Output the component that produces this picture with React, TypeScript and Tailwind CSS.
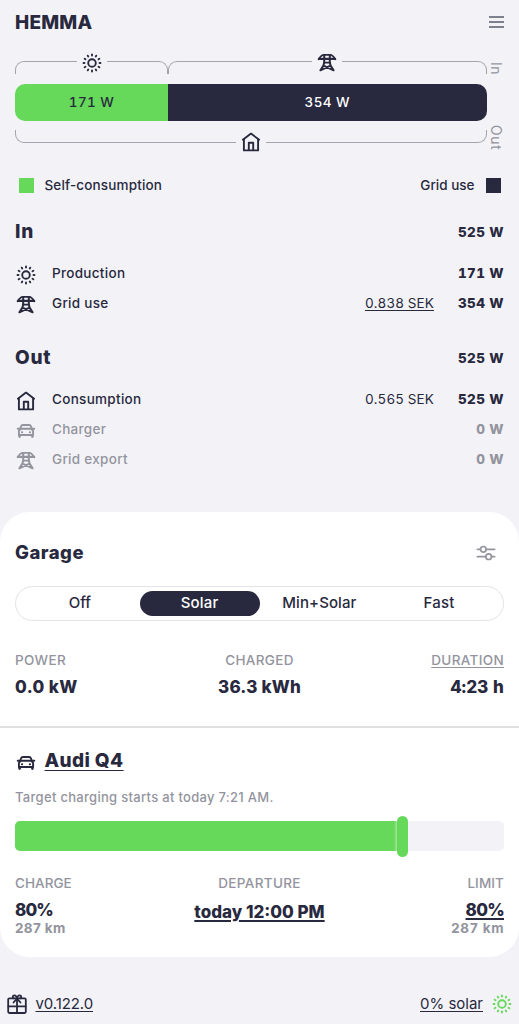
import type { ReactNode } from "react";

type IconProps = { className?: string };

function SunIcon({ className = "" }: IconProps) {
  return (
    <svg viewBox="0 0 20 20" className={`h-5 w-5 shrink-0 ${className}`} fill="none" stroke="currentColor" strokeWidth="1.9" strokeLinecap="round">
      <circle cx="10" cy="10" r="3.8" />
      {[0, 30, 60, 90, 120, 150, 180, 210, 240, 270, 300, 330].map((a) => (
        <path key={a} d="M10 1.5V2.5" transform={`rotate(${a} 10 10)`} />
      ))}
    </svg>
  );
}

function PylonIcon({ className = "" }: IconProps) {
  return (
    <svg viewBox="0 0 20 20" className={`h-5 w-5 shrink-0 ${className}`} fill="none" stroke="currentColor" strokeWidth="1.8" strokeLinecap="round" strokeLinejoin="round">
      <path d="M1.6 6.2C3 4 4.8 1.9 6.8 1.9H13.2C15.2 1.9 17 4 18.4 6.2" />
      <path d="M2 5.8H18" strokeWidth="2.2" />
      <path d="M7.2 1.9V9.4L6.4 12.6L3.4 17.3L13.4 12.6M12.8 1.9V9.4L13.6 12.6L16.6 17.3L6.6 12.6" strokeWidth="2" />
      <path d="M7.2 9.6H12.8" />
    </svg>
  );
}

function HomeIcon({ className = "" }: IconProps) {
  return (
    <svg viewBox="0 0 20 20" className={`h-5 w-5 shrink-0 ${className}`} fill="none" stroke="currentColor" strokeWidth="1.9" strokeLinecap="round" strokeLinejoin="round">
      <path d="M1.9 7.7L10 1.6L18.1 7.7" />
      <path d="M2.9 7.4V18.4H17.1V7.4" />
      <path d="M7.8 18.1V10.8H12.2V18.1" />
    </svg>
  );
}

function CarIcon({ className = "" }: IconProps) {
  return (
    <svg viewBox="0 0 20 20" className={`h-5 w-5 shrink-0 ${className}`} fill="none" stroke="currentColor" strokeWidth="1.9" strokeLinecap="round" strokeLinejoin="round">
      <path d="M4.1 8L5.1 5.2Q5.5 4 6.9 4H13.1Q14.5 4 14.9 5.2L15.9 8" />
      <path d="M1.7 7.7H18.3" />
      <path d="M4.3 8.1L2.9 9.8V14H17.1V9.8L15.7 8.1" />
      <path d="M3.6 14.5V15.6M16.4 14.5V15.6" strokeWidth="2.6" />
      <path d="M5.9 11.2H6.2M13.8 11.2H14.1" />
    </svg>
  );
}

function GiftIcon({ className = "" }: IconProps) {
  return (
    <svg viewBox="0 0 20 20" className={`h-5 w-5 shrink-0 ${className}`} fill="none" stroke="currentColor" strokeWidth="1.8" strokeLinecap="round" strokeLinejoin="round">
      <rect x="1.2" y="4.4" width="17.6" height="14.6" rx="1.2" />
      <path d="M1.4 12.4H18.6M10 4.2V18.8" />
      <path d="M10 4.4C9.6 2.4 8.8 1.3 7.4 1.3C5.4 1.3 5.2 3.8 6.8 4.4M10 4.4C10.4 2.4 11.2 1.3 12.6 1.3C14.6 1.3 14.8 3.8 13.2 4.4" />
      <path d="M10 4.6L6.5 8.5M10 4.6L13.5 8.5" />
    </svg>
  );
}

function SlidersIcon({ className = "" }: IconProps) {
  return (
    <svg viewBox="0 0 20 20" className={`h-5 w-5 shrink-0 ${className}`} fill="none" stroke="currentColor" strokeWidth="1.7" strokeLinecap="round">
      <path d="M1.4 6.3H4.3M10.3 6.3H18.6M1.4 13.7H9.7M15.7 13.7H18.6" />
      <circle cx="7.3" cy="6.3" r="2.8" />
      <circle cx="12.7" cy="13.7" r="2.8" />
    </svg>
  );
}

function TopBracket({ className, children }: { className: string; children: ReactNode }) {
  return (
    <div className={`flex h-[22px] items-end ${className}`}>
      <div className="h-[13px] flex-1 rounded-tl-[9px] border-t border-l border-[#a3a4ad]" />
      <div className="flex h-[22px] w-[30px] justify-center">{children}</div>
      <div className="h-[13px] flex-1 rounded-tr-[9px] border-t border-r border-[#a3a4ad]" />
    </div>
  );
}

type RowProps = { icon: ReactNode; label: string; value: string; cost?: string; underline?: boolean; muted?: boolean };

function Row({ icon, label, value, cost, underline = false, muted = false }: RowProps) {
  return (
    <div className={`flex h-[30px] items-center text-[13.5px] ${muted ? "text-[#93949e]" : ""}`}>
      <div className="w-[37px] pt-[3px] pl-[1px]">{icon}</div>
      <div className="flex-1 font-medium tracking-[0.3px]">{label}</div>
      {cost && <div className={`tracking-[0.1px] tabular-nums ${underline ? "underline underline-offset-2" : ""}`}>{cost}</div>}
      <div className="w-[70px] text-right font-extrabold tracking-[0.4px] tabular-nums">{value}</div>
    </div>
  );
}

function Heading({ title }: { title: string }) {
  return (
    <div className="flex h-[30px] items-center justify-between">
      <h2 className="pt-[2px] text-[19px] font-extrabold tracking-[0.8px]">{title}</h2>
      <div className="pt-[2px] text-[13.5px] font-extrabold tracking-[0.4px] tabular-nums">525 W</div>
    </div>
  );
}

export default function App() {
  return (
    <div className="h-[1024px] w-[519px] overflow-hidden bg-[#f3f3f7] font-['Inter',sans-serif] text-[#28293e]">
      <div className="px-[15px]">
        <header className="flex h-11 items-center justify-between">
          <h1 className="pt-[2px] text-[19px] font-extrabold tracking-[0.2px]">HEMMA</h1>
          <div className="flex w-[15px] flex-col gap-[3px] text-[#7d818c]">
            <div className="h-[2px] bg-current" />
            <div className="h-[2px] bg-current" />
            <div className="h-[2px] bg-current" />
          </div>
        </header>

        <div className="mt-2 flex h-[100px]">
          <div className="w-[471.5px]">
            <div className="flex">
              <TopBracket className="w-[153px]"><SunIcon className="mt-[0.5px]" /></TopBracket>
              <TopBracket className="flex-1"><PylonIcon className="mt-[0.5px]" /></TopBracket>
            </div>
            <div className="mt-[9.5px] flex h-[37px] overflow-hidden rounded-[10px] text-[13.5px] font-medium tabular-nums">
              <div className="flex w-[153px] items-center justify-center bg-[#66d85a] tracking-[0.4px]">171 W</div>
              <div className="flex flex-1 items-center justify-center bg-[#28293e] tracking-[0.4px] text-white">354 W</div>
            </div>
            <div className="mt-[9.5px] flex h-[22px]">
              <div className="h-[13px] flex-1 rounded-bl-[9px] border-b border-l border-[#a3a4ad]" />
              <div className="flex w-[30px] justify-center pt-[1.5px]"><HomeIcon /></div>
              <div className="h-[13px] flex-1 rounded-br-[9px] border-r border-b border-[#a3a4ad]" />
            </div>
          </div>
          <div className="flex w-[17.5px] flex-col items-end justify-between pt-[10px] pr-px pb-[2px] text-[14px] leading-[14px] tracking-[0.6px] text-[#93949e]">
            <span className="[writing-mode:vertical-rl]">In</span>
            <span className="[writing-mode:vertical-rl]">Out</span>
          </div>
        </div>

        <div className="mt-[23.5px] mb-[20.5px] flex h-5 items-center justify-between px-[3.5px] text-[13.5px] font-medium">
          <div className="flex items-center gap-[11px]">
            <div className="h-[15px] w-[15px] bg-[#66d85a]" />
            <span className="tracking-[0.15px]">Self-consumption</span>
          </div>
          <div className="flex items-center gap-[11px]">
            <span>Grid use</span>
            <div className="h-[15px] w-[15px] bg-[#28293e]" />
          </div>
        </div>

        <section>
          <Heading title="In" />
          <div className="mt-3">
            <Row icon={<SunIcon />} label="Production" value="171 W" />
            <Row icon={<PylonIcon />} label="Grid use" value="354 W" cost="0.838 SEK" underline />
          </div>
        </section>
        <section className="mt-6">
          <Heading title="Out" />
          <div className="mt-3">
            <Row icon={<HomeIcon />} label="Consumption" value="525 W" cost="0.565 SEK" />
            <Row icon={<CarIcon />} label="Charger" value="0 W" muted />
            <Row icon={<PylonIcon />} label="Grid export" value="0 W" muted />
          </div>
        </section>
      </div>

      <main className="mt-[38px] h-[445px] rounded-[30px] bg-white pt-[26px]">
        <div className="px-[15px]">
          <div className="flex h-[30px] items-center justify-between pr-[8.5px]">
            <h2 className="text-[18.5px] font-extrabold tracking-[0.5px]">Garage</h2>
            <SlidersIcon className="text-[#93949e]" />
          </div>
          <div className="mt-[18px] grid h-[35px] grid-cols-4 rounded-full border border-[#e3e3e8] px-1 py-1 text-[15px] font-medium">
            <div className="flex items-center justify-center">Off</div>
            <div className="flex items-center justify-center rounded-full bg-[#28293e] tracking-[0.2px] text-white">Solar</div>
            <div className="flex items-center justify-center tracking-[0.1px]">Min+Solar</div>
            <div className="flex items-center justify-center tracking-[0.2px]">Fast</div>
          </div>
          <div className="mt-[29px] grid h-5 grid-cols-3 items-center text-[13.5px] font-medium tracking-[0.35px] text-[#93949e]">
            <div>POWER</div>
            <div className="text-center">CHARGED</div>
            <div className="text-right underline underline-offset-2">DURATION</div>
          </div>
          <div className="mt-1 grid h-[26px] grid-cols-3 items-center pt-px text-[17px] font-extrabold">
            <div className="tracking-[0.4px]">0.0 kW</div>
            <div className="text-center tracking-[0.2px]">36.3 kWh</div>
            <div className="text-right tracking-[0.1px] tabular-nums">4:23 h</div>
          </div>
        </div>
        <div className="mt-[26px] h-[2px] bg-[#e0e0e3]" />
        <div className="px-[15px]">
          <div className="mt-[18px] flex h-[30px] items-center gap-[8.5px] pl-[1px]">
            <CarIcon className="mt-[3px]" />
            <h3 className="pt-[1px] text-[19px] font-extrabold tracking-[0.4px] underline decoration-1 underline-offset-[3px]">Audi Q4</h3>
          </div>
          <div className="mt-[11px] h-5 text-[13px] leading-5 font-medium tracking-[0.3px] text-[#93949e]">Target charging starts at today 7:21 AM.</div>
          <div className="mt-[14px] flex h-[30px] items-center rounded-[5px] bg-[#f3f3f7]">
            <div className="h-full w-[379px] rounded-l-[5px] bg-[#66d85a]" />
            <div className="h-full w-[3px] bg-gradient-to-r from-[#66d85a] to-[#a4e69c]" />
            <div className="h-[41px] w-[11px] shrink-0 rounded-full bg-[#66d85a]" />
          </div>
          <div className="mt-[22px] grid h-5 grid-cols-3 items-center text-[13.5px] font-medium tracking-[0.35px] text-[#93949e]">
            <div className="tracking-[0.05px]">CHARGE</div>
            <div className="text-center">DEPARTURE</div>
            <div className="text-right tracking-[0.1px]">LIMIT</div>
          </div>
          <div className="mt-[7px] grid grid-cols-[1fr_auto_1fr] text-[17px] font-extrabold">
            <div>
              <div className="leading-5 tracking-[-0.9px]">80%</div>
              <div className="text-[13.5px] leading-4 font-bold tracking-[0.35px] text-[#93949e]">287 km</div>
            </div>
            <div className="pt-[2px] leading-5 tracking-[0px] underline decoration-[1.5px] underline-offset-2">today 12:00 PM</div>
            <div className="text-right">
              <div className="leading-5 tracking-[-0.7px] underline decoration-[1.5px] underline-offset-2">80%</div>
              <div className="text-[13.5px] leading-4 font-bold tracking-[0.5px] text-[#93949e] tabular-nums">287 km</div>
            </div>
          </div>
        </div>
      </main>

      <footer className="mt-[27px] flex h-10 items-center justify-between px-[7px] text-[15px]">
        <div className="flex items-center gap-[8.5px]">
          <GiftIcon />
          <span className="tracking-[-0.1px] underline underline-offset-2">v0.122.0</span>
        </div>
        <div className="flex items-center gap-[9px]">
          <span className="underline underline-offset-2">0% solar</span>
          <SunIcon className="text-[#66d85a]" />
        </div>
      </footer>
    </div>
  );
}
